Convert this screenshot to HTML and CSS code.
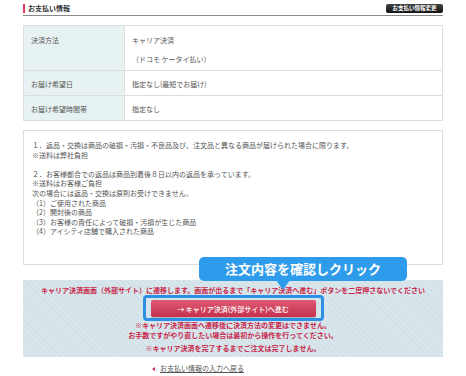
FILE: index.html
```html
<!DOCTYPE html>
<html lang="ja">

<head>
    <meta charset="UTF-8" />
    <meta name="viewport" content="width=device-width, initial-scale=1.0" />
    <title>お支払い情報</title>
    <link rel="stylesheet" href="styles.css">
</head>

<body>
    <div class="page">
        <div class="section-head">
            <h2>お支払い情報</h2>
            <a href="#" class="change-btn">お支払い情報変更</a>
        </div>

        <table class="info-table">
            <tr>
                <th>決済方法</th>
                <td>
                    <p>キャリア決済</p>
                    <p class="sub">（ドコモ ケータイ払い）</p>
                </td>
            </tr>
            <tr>
                <th>お届け希望日</th>
                <td>指定なし(最短でお届け)</td>
            </tr>
            <tr>
                <th>お届け希望時間帯</th>
                <td>指定なし</td>
            </tr>
        </table>

        <div class="notes">
            <p>１．返品・交換は商品の破損・汚損・不良品及び、注文品と異なる商品が届けられた場合に限ります。<br>※送料は弊社負担</p>
            <p>２．お客様都合での返品は商品到着後８日以内の返品を承っています。<br>※送料はお客様ご負担<br>次の場合には返品・交換は原則お受けできません。<br>（1）ご使用された商品<br>（2）開封後の商品<br>（3）お客様の責任によって破損・汚損が生じた商品<br>（4）アイシティ店舗で購入された商品</p>
        </div>

        <div class="carrier-box">
            <p class="warn">キャリア決済画面（外部サイト）に遷移します。画面が出るまで「キャリア決済へ進む」ボタンを二度押さないでください</p>
            <div class="btn-frame">
                <button type="button" class="go-btn">→ キャリア決済(外部サイト)へ進む</button>
            </div>
            <p class="warn">※キャリア決済画面へ遷移後に決済方法の変更はできません。<br>お手数ですがやり直したい場合は最初から操作を行ってください。</p>
            <p class="warn last">※キャリア決済を完了するまでご注文は完了しません。</p>
            <div class="callout">注文内容を確認しクリック</div>
        </div>

        <a href="#" class="back-link">お支払い情報の入力へ戻る</a>
    </div>
</body>

</html>
```

FILE: styles.css
```css
* {
    box-sizing: border-box;
    margin: 0;
    padding: 0;
}

body {
    font-family: "Noto Sans CJK JP", "Noto Sans", sans-serif;
    background: #fff;
    color: #555;
    font-size: 7px;
}

.page {
    width: 420px;
    margin: 0 23px;
    padding-top: 3px;
}

.section-head {
    display: flex;
    justify-content: space-between;
    align-items: center;
    padding-bottom: 2px;
    border-bottom: 1px solid #8a8a8a;
}

.section-head h2 {
    font-size: 7px;
    font-weight: 600;
    color: #333;
    border-left: 2px solid #e8375a;
    padding-left: 3px;
    line-height: 9px;
    margin-top: 1px;
}

.change-btn {
    display: block;
    background: linear-gradient(#444, #111);
    color: #fff;
    font-size: 5.5px;
    font-weight: 600;
    text-decoration: none;
    line-height: 9px;
    padding: 0 4px;
    border-radius: 2px;
    width: 57px;
    text-align: center;
}

.info-table {
    width: 100%;
    border-collapse: collapse;
    margin-top: 9px;
    border: 1px solid #dedede;
}

.info-table th,
.info-table td {
    border: 1px solid #dedede;
    text-align: left;
    vertical-align: top;
    font-weight: normal;
    line-height: 10px;
}

.info-table th {
    width: 101px;
    background: #e7f2f2;
    padding: 8px 7px 6px;
}

.info-table td {
    padding: 8px 7px 6px;
}

.info-table tr:first-child th,
.info-table tr:first-child td {
    padding-top: 9px;
    height: 44px;
}

.info-table td .sub {
    margin-top: 9px;
}

.info-table tr + tr th,
.info-table tr + tr td {
    height: 25px;
}

.notes {
    margin-top: 9px;
    border: 1px solid #dedede;
    height: 135px;
    padding: 10px 8px;
    line-height: 9.6px;
    color: #555;
}

.notes p + p {
    margin-top: 9.6px;
}

.carrier-box {
    position: relative;
    margin-top: 15px;
    background: repeating-linear-gradient(45deg, #d9e7ed 0 2px, #d3e2e9 2px 4px);
    padding: 5px 0 4px;
    text-align: center;
}

.warn {
    color: #c8264a;
    font-weight: 600;
    line-height: 10px;
}

.warn.last {
    margin-top: 3px;
}

.btn-frame {
    display: inline-block;
    margin: 0 0 -1px;
    border: 3px solid #2b90e6;
    border-radius: 4px;
    padding: 2px 5px 1px;
    vertical-align: top;
}

.go-btn {
    display: block;
    width: 165px;
    height: 17px;
    border: none;
    border-radius: 2px;
    background: linear-gradient(#df5a72, #c5304f);
    color: #fff;
    font-family: inherit;
    font-size: 7px;
    font-weight: 500;
    box-shadow: 0 1px 1px rgba(0, 0, 0, 0.2);
}

.callout {
    position: absolute;
    left: 176px;
    top: -23px;
    width: 208px;
    height: 24px;
    background: #2f9ceb;
    border-radius: 5px;
    color: #fff;
    font-size: 13px;
    font-weight: 700;
    line-height: 24px;
    text-align: center;
}

.callout::after {
    content: '';
    position: absolute;
    left: 77px;
    bottom: -9px;
    border-left: 7px solid transparent;
    border-right: 7px solid transparent;
    border-top: 10px solid #2f9ceb;
}

.back-link {
    display: block;
    margin: 6px 0 0 129px;
    color: #555;
    font-size: 7px;
    text-decoration: underline;
    line-height: 10px;
}

.back-link::before {
    content: '';
    display: inline-block;
    border-top: 2px solid transparent;
    border-bottom: 2px solid transparent;
    border-right: 3px solid #d0284a;
    margin-right: 5px;
    vertical-align: middle;
}
```
